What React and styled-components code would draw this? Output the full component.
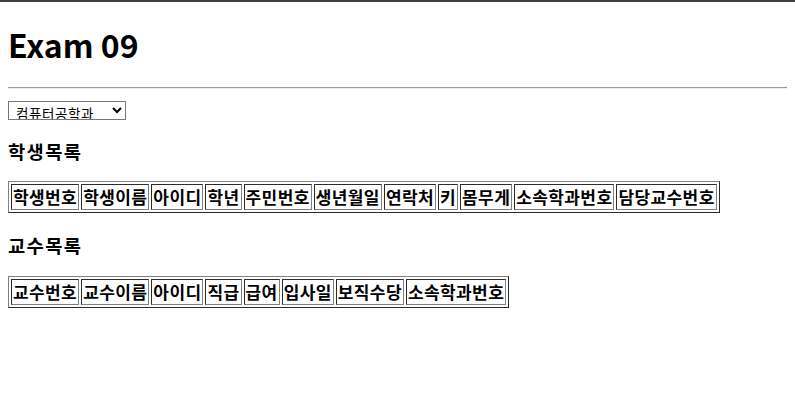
import React from "react";
import styled, { createGlobalStyle } from "styled-components";

const GlobalStyle = createGlobalStyle`
  html {
    border-top: 2px solid #404040;
    background: #fff;
  }
  body {
    margin: 0 8px 8px;
    font-family: "Noto Sans CJK KR", "Noto Sans", sans-serif;
    color: #000;
  }
`;

const Title = styled.h1`
  font-size: 32px;
  line-height: 42px;
  font-weight: 700;
  margin: 21.44px 0;
`;

const Rule = styled.hr`
  margin: 8px 0;
  border: 0;
  border-top: 1px solid #9a9a9a;
  border-bottom: 1px solid #eeeeee;
  height: 0;
`;

const SelectRow = styled.div`
  padding-top: 4px;
  height: 18px;
`;

const DeptSelect = styled.select`
  display: block;
  box-sizing: border-box;
  width: 118px;
  height: 19px;
  padding: 0 0 0 3px;
  font-family: "Noto Sans CJK KR", sans-serif;
  font-size: 13.5px;
  letter-spacing: 0.6px;
  border: 1px solid #767676;
  border-radius: 0;
  background: #fff;
  color: #000;
`;

const SectionTitle = styled.h3`
  font-size: 18.72px;
  line-height: 25px;
  font-weight: 700;
  letter-spacing: 1.4px;
  margin: 18.72px 0;
`;

const Table = styled.table`
  border: 1px outset gray;
  border-spacing: 2px;
  border-collapse: separate;
`;

const HeadCell = styled.th`
  border: 1px inset gray;
  padding: 1px;
  font-size: 17px;
  line-height: 22px;
  font-weight: 700;
  letter-spacing: 0.4px;
  white-space: nowrap;
`;

const studentCols = [
  "학생번호", "학생이름", "아이디", "학년", "주민번호", "생년월일",
  "연락처", "키", "몸무게", "소속학과번호", "담당교수번호",
];

const professorCols = [
  "교수번호", "교수이름", "아이디", "직급", "급여", "입사일", "보직수당", "소속학과번호",
];

function HeaderTable({ cols }) {
  return (
    <Table>
      <thead>
        <tr>
          {cols.map((c) => (
            <HeadCell key={c}>{c}</HeadCell>
          ))}
        </tr>
      </thead>
    </Table>
  );
}

export default function App() {
  return (
    <>
      <GlobalStyle />
      <Title>Exam 09</Title>
      <Rule />
      <SelectRow>
        <DeptSelect defaultValue="cs">
          <option value="cs">컴퓨터공학과</option>
        </DeptSelect>
      </SelectRow>
      <SectionTitle>학생목록</SectionTitle>
      <HeaderTable cols={studentCols} />
      <SectionTitle>교수목록</SectionTitle>
      <HeaderTable cols={professorCols} />
    </>
  );
}
